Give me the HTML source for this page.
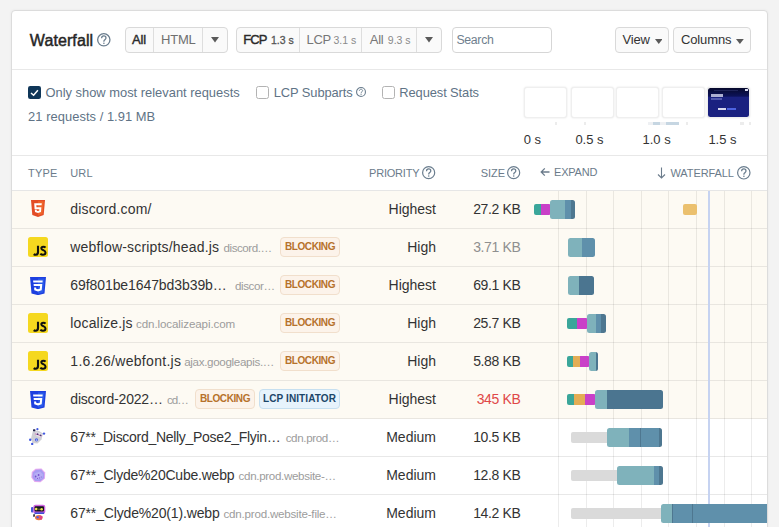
<!DOCTYPE html>
<html><head><meta charset="utf-8">
<style>
*{box-sizing:border-box;margin:0;padding:0}
html,body{width:779px;height:527px;overflow:hidden;background:#f3f3f3;font-family:"Liberation Sans",sans-serif;color:#333;position:relative}
.a{position:absolute;white-space:nowrap}
.grp{border:1px solid #d9d9d9;border-radius:4px;background:#fafafa}
.dv{width:1px;background:#dedede}
.frame{top:87px;width:43px;height:31px;border:1px solid #efefef;border-radius:3px;background:#fff;box-shadow:0 0 2px rgba(0,0,0,.13)}
.badge{height:20px;border-radius:4px;font-size:10px;font-weight:700;line-height:18px;text-align:center;letter-spacing:-0.4px}
.blk{background:#fcf3ea;border:1px solid #f1dfcc;color:#b6712b}
.lcp{background:#e7f3fc;border:1px solid #c6dff0;color:#1c4669;letter-spacing:0.1px}
</style></head><body>
<div class="a" style="left:11px;top:10px;width:757px;height:560px;background:#fff;border:1px solid #dcdcdc;border-radius:4px;box-shadow:0 0 3px rgba(0,0,0,.05)"></div>
<div class="a" style="left:29.8px;top:31.01px;font-size:16px;line-height:19px;color:#262626;font-weight:400;letter-spacing:0.1px;-webkit-text-stroke:0.45px #262626;">Waterfall</div>
<svg class="a" style="left:97.3px;top:33.2px" width="13.6" height="13.6" viewBox="0 0 13.6 13.6"><circle cx="6.8" cy="6.8" r="6.1499999999999995" fill="none" stroke="#6a7d8e" stroke-width="1.3"/><g transform="scale(1.0)"><path d="M4.6 5.3C4.6 3.9 5.6 3 6.8 3C8 3 9 3.8 9 5C9 6.3 7.6 6.6 7.1 7.5C6.9 7.9 6.9 8.3 6.9 8.7" fill="none" stroke="#6a7d8e" stroke-width="1.25"/><circle cx="6.9" cy="10.3" r="0.8" fill="#6a7d8e"/></g></svg>
<div class="a grp" style="left:125px;top:27px;width:103px;height:26px"></div>
<div class="a dv" style="left:153px;top:28px;height:24px"></div>
<div class="a dv" style="left:202px;top:28px;height:24px"></div>
<div class="a" style="left:132px;top:31.70px;font-size:13px;line-height:16px;color:#2a2a2a;font-weight:400;letter-spacing:-0.1px;-webkit-text-stroke:0.4px #2a2a2a;">All</div>
<div class="a" style="left:161px;top:31.70px;font-size:13px;line-height:16px;color:#6f6f6f;font-weight:400;letter-spacing:-0.2px;">HTML</div>
<svg class="a" style="left:211px;top:37.2px" width="8" height="5.5" viewBox="0 0 8 5.5"><path d="M0 0H8L4.0 5.5Z" fill="#5a5a5a"/></svg>
<div class="a grp" style="left:236px;top:27px;width:206px;height:26px"></div>
<div class="a dv" style="left:299px;top:28px;height:24px"></div>
<div class="a dv" style="left:361px;top:28px;height:24px"></div>
<div class="a dv" style="left:416px;top:28px;height:24px"></div>
<div class="a" style="left:243.3px;top:31.50px;font-size:13px;line-height:16px;color:#2a2a2a;font-weight:400;letter-spacing:-0.9px;-webkit-text-stroke:0.4px #2a2a2a;">FCP</div>
<div class="a" style="left:271px;top:33.83px;font-size:10.5px;line-height:13px;color:#555;font-weight:400;letter-spacing:0px;-webkit-text-stroke:0.3px #555;">1.3 s</div>
<div class="a" style="left:306.6px;top:31.50px;font-size:13px;line-height:16px;color:#777;font-weight:400;letter-spacing:-0.3px;">LCP</div>
<div class="a" style="left:333.5px;top:33.83px;font-size:10.5px;line-height:13px;color:#8a8a8a;font-weight:400;letter-spacing:0px;">3.1 s</div>
<div class="a" style="left:369.7px;top:31.50px;font-size:13px;line-height:16px;color:#777;font-weight:400;letter-spacing:-0.2px;">All</div>
<div class="a" style="left:387.8px;top:33.83px;font-size:10.5px;line-height:13px;color:#8a8a8a;font-weight:400;letter-spacing:0px;">9.3 s</div>
<svg class="a" style="left:425px;top:37.2px" width="8" height="5.5" viewBox="0 0 8 5.5"><path d="M0 0H8L4.0 5.5Z" fill="#5a5a5a"/></svg>
<div class="a grp" style="left:452px;top:27px;width:100px;height:26px;background:#fff;border-color:#d6d6d6"></div>
<div class="a" style="left:456.4px;top:32.53px;font-size:12.3px;line-height:15px;color:#6f7f8e;font-weight:400;letter-spacing:-0.3px;">Search</div>
<div class="a grp" style="left:615px;top:27px;width:54px;height:26px"></div>
<div class="a" style="left:622.5px;top:31.60px;font-size:13px;line-height:16px;color:#333;font-weight:400;letter-spacing:-0.2px;">View</div>
<svg class="a" style="left:654.7px;top:38.6px" width="7.5" height="5" viewBox="0 0 7.5 5"><path d="M0 0H7.5L3.75 5Z" fill="#5a5a5a"/></svg>
<div class="a grp" style="left:673px;top:27px;width:78px;height:26px"></div>
<div class="a" style="left:680.9px;top:31.60px;font-size:13px;line-height:16px;color:#333;font-weight:400;letter-spacing:-0.1px;">Columns</div>
<svg class="a" style="left:736px;top:38.6px" width="7.8" height="5" viewBox="0 0 7.8 5"><path d="M0 0H7.8L3.9 5Z" fill="#5a5a5a"/></svg>
<div class="a" style="left:12px;top:69px;width:755px;height:1px;background:#e8e8e8"></div>
<svg class="a" style="left:28px;top:86px" width="13" height="13" viewBox="0 0 13 13"><rect x="0" y="0" width="13" height="13" rx="2.2" fill="#0f3658"/><path d="M3 7L5.6 9.2L9.9 4.2" fill="none" stroke="#fff" stroke-width="1.5"/></svg>
<div class="a" style="left:45.5px;top:85.24px;font-size:12.9px;line-height:15px;color:#607386;font-weight:400;letter-spacing:0px;">Only show most relevant requests</div>
<div class="a" style="left:256px;top:86px;width:13px;height:13px;border:1px solid #b3b3b3;border-radius:2.5px;background:#fff"></div>
<div class="a" style="left:273.8px;top:85.24px;font-size:12.9px;line-height:15px;color:#607386;font-weight:400;letter-spacing:-0.1px;">LCP Subparts</div>
<svg class="a" style="left:356px;top:87.2px" width="10" height="10" viewBox="0 0 10 10"><circle cx="5.0" cy="5.0" r="4.45" fill="none" stroke="#6a7d8e" stroke-width="1.1"/><g transform="scale(0.7352941176470589)"><path d="M4.6 5.3C4.6 3.9 5.6 3 6.8 3C8 3 9 3.8 9 5C9 6.3 7.6 6.6 7.1 7.5C6.9 7.9 6.9 8.3 6.9 8.7" fill="none" stroke="#6a7d8e" stroke-width="1.25"/><circle cx="6.9" cy="10.3" r="0.8" fill="#6a7d8e"/></g></svg>
<div class="a" style="left:382px;top:86px;width:13px;height:13px;border:1px solid #b3b3b3;border-radius:2.5px;background:#fff"></div>
<div class="a" style="left:399.3px;top:85.24px;font-size:12.9px;line-height:15px;color:#607386;font-weight:400;letter-spacing:-0.1px;">Request Stats</div>
<div class="a" style="left:28.1px;top:109.04px;font-size:12.9px;line-height:15px;color:#607386;font-weight:400;letter-spacing:0.05px;">21 requests / 1.91 MB</div>
<div class="a frame" style="left:524px"></div>
<div class="a frame" style="left:570.5px"></div>
<div class="a frame" style="left:616px"></div>
<div class="a frame" style="left:661.5px"></div>
<div class="a frame" style="left:707px;background:#fff;border-color:#efefef"></div>
<div class="a" style="left:707.5px;top:88px;width:41px;height:29px;border-radius:2.5px;background:linear-gradient(#06092c 0px,#0c1258 8px,#1a2180 9.5px,#1a2180 100%)"></div>
<div class="a" style="left:711px;top:94px;width:12px;height:2.5px;background:#c9cbe6;opacity:.85"></div>
<div class="a" style="left:711px;top:98px;width:11px;height:2px;background:#5f66b8;opacity:.8"></div>
<div class="a" style="left:718px;top:108px;width:8px;height:1.8px;background:#d7d8ef"></div>
<div class="a" style="left:727px;top:108px;width:9px;height:1.8px;background:#4d63e0"></div>
<div class="a" style="left:745px;top:89px;width:2.5px;height:2px;background:#d9dcf2"></div>
<div class="a" style="left:714px;top:89.5px;width:24px;height:1px;background:#2a2f66;opacity:.7"></div>
<div class="a" style="left:555px;top:122px;width:2px;height:3px;background:#ececec"></div>
<div class="a" style="left:584px;top:122px;width:2px;height:3px;background:#ececec"></div>
<div class="a" style="left:648px;top:122px;width:5px;height:3px;background:#eef0f3"></div>
<div class="a" style="left:653px;top:122px;width:7px;height:3px;background:#c6d6e2"></div>
<div class="a" style="left:660px;top:122px;width:6px;height:3px;background:#eef0f3"></div>
<div class="a" style="left:666px;top:122px;width:13px;height:3px;background:#c6d6e2"></div>
<div class="a" style="left:686px;top:122px;width:2px;height:3px;background:#ececec"></div>
<div class="a" style="left:740px;top:122px;width:4px;height:3px;background:#ececec"></div>
<div class="a" style="left:749px;top:122px;width:2px;height:3px;background:#ececec"></div>
<div class="a" style="left:523.7px;top:131.70px;font-size:13px;line-height:16px;color:#333;font-weight:400;letter-spacing:0px;">0 s</div>
<div class="a" style="left:575.4px;top:131.70px;font-size:13px;line-height:16px;color:#333;font-weight:400;letter-spacing:0px;">0.5 s</div>
<div class="a" style="left:642.5px;top:131.70px;font-size:13px;line-height:16px;color:#333;font-weight:400;letter-spacing:0px;">1.0 s</div>
<div class="a" style="left:708.4px;top:131.70px;font-size:13px;line-height:16px;color:#333;font-weight:400;letter-spacing:0px;">1.5 s</div>
<div class="a" style="left:12px;top:155px;width:755px;height:1px;background:#e8e8e8"></div>
<div class="a" style="left:28.1px;top:166.76px;font-size:11px;line-height:13px;color:#6b7b8b;font-weight:400;letter-spacing:0.2px;">TYPE</div>
<div class="a" style="left:70.2px;top:166.76px;font-size:11px;line-height:13px;color:#6b7b8b;font-weight:400;letter-spacing:0.2px;">URL</div>
<div class="a" style="left:369px;top:166.76px;font-size:11px;line-height:13px;color:#6b7b8b;font-weight:400;letter-spacing:-0.2px;">PRIORITY</div>
<svg class="a" style="left:422.4px;top:166.3px" width="13.3" height="13.3" viewBox="0 0 13.3 13.3"><circle cx="6.65" cy="6.65" r="6.050000000000001" fill="none" stroke="#6a7d8e" stroke-width="1.2"/><g transform="scale(0.9779411764705883)"><path d="M4.6 5.3C4.6 3.9 5.6 3 6.8 3C8 3 9 3.8 9 5C9 6.3 7.6 6.6 7.1 7.5C6.9 7.9 6.9 8.3 6.9 8.7" fill="none" stroke="#6a7d8e" stroke-width="1.25"/><circle cx="6.9" cy="10.3" r="0.8" fill="#6a7d8e"/></g></svg>
<div class="a" style="left:480.7px;top:166.76px;font-size:11px;line-height:13px;color:#6b7b8b;font-weight:400;letter-spacing:0px;">SIZE</div>
<svg class="a" style="left:507.4px;top:166.3px" width="13.3" height="13.3" viewBox="0 0 13.3 13.3"><circle cx="6.65" cy="6.65" r="6.050000000000001" fill="none" stroke="#6a7d8e" stroke-width="1.2"/><g transform="scale(0.9779411764705883)"><path d="M4.6 5.3C4.6 3.9 5.6 3 6.8 3C8 3 9 3.8 9 5C9 6.3 7.6 6.6 7.1 7.5C6.9 7.9 6.9 8.3 6.9 8.7" fill="none" stroke="#6a7d8e" stroke-width="1.25"/><circle cx="6.9" cy="10.3" r="0.8" fill="#6a7d8e"/></g></svg>
<svg class="a" style="left:540px;top:167px" width="10" height="10" viewBox="0 0 10 10"><path d="M9.5 5H1.2M4.8 1.4L1.2 5L4.8 8.6" fill="none" stroke="#6b7b8b" stroke-width="1.3"/></svg>
<div class="a" style="left:554px;top:166.16px;font-size:11px;line-height:13px;color:#6b7b8b;font-weight:400;letter-spacing:-0.2px;">EXPAND</div>
<svg class="a" style="left:657px;top:167px" width="9" height="12" viewBox="0 0 9 12"><path d="M4.5 0.5V11M1 7.5L4.5 11L8 7.5" fill="none" stroke="#6b7b8b" stroke-width="1.1"/></svg>
<div class="a" style="left:670.5px;top:166.76px;font-size:11px;line-height:13px;color:#6b7b8b;font-weight:400;letter-spacing:-0.1px;">WATERFALL</div>
<svg class="a" style="left:737px;top:166.3px" width="13.6" height="13.6" viewBox="0 0 13.6 13.6"><circle cx="6.8" cy="6.8" r="6.2" fill="none" stroke="#6a7d8e" stroke-width="1.2"/><g transform="scale(1.0)"><path d="M4.6 5.3C4.6 3.9 5.6 3 6.8 3C8 3 9 3.8 9 5C9 6.3 7.6 6.6 7.1 7.5C6.9 7.9 6.9 8.3 6.9 8.7" fill="none" stroke="#6a7d8e" stroke-width="1.25"/><circle cx="6.9" cy="10.3" r="0.8" fill="#6a7d8e"/></g></svg>
<div class="a" style="left:12px;top:190px;width:755px;height:1px;background:#e6e6e6"></div>
<div class="a" style="left:12px;top:191px;width:755px;height:37px;background:#fdfaf3"></div>
<div class="a" style="left:12px;top:228px;width:755px;height:1px;background:#e9e6e0"></div>
<div class="a" style="left:12px;top:229px;width:755px;height:37px;background:#fdfaf3"></div>
<div class="a" style="left:12px;top:266px;width:755px;height:1px;background:#e9e6e0"></div>
<div class="a" style="left:12px;top:267px;width:755px;height:37px;background:#fdfaf3"></div>
<div class="a" style="left:12px;top:304px;width:755px;height:1px;background:#e9e6e0"></div>
<div class="a" style="left:12px;top:305px;width:755px;height:37px;background:#fdfaf3"></div>
<div class="a" style="left:12px;top:342px;width:755px;height:1px;background:#e9e6e0"></div>
<div class="a" style="left:12px;top:343px;width:755px;height:37px;background:#fdfaf3"></div>
<div class="a" style="left:12px;top:380px;width:755px;height:1px;background:#e9e6e0"></div>
<div class="a" style="left:12px;top:381px;width:755px;height:37px;background:#fdfaf3"></div>
<div class="a" style="left:12px;top:418px;width:755px;height:1px;background:#e9e6e0"></div>
<div class="a" style="left:12px;top:419px;width:755px;height:37px;background:#fff"></div>
<div class="a" style="left:12px;top:456px;width:755px;height:1px;background:#e8e8e8"></div>
<div class="a" style="left:12px;top:457px;width:755px;height:37px;background:#fff"></div>
<div class="a" style="left:12px;top:494px;width:755px;height:1px;background:#e8e8e8"></div>
<div class="a" style="left:12px;top:495px;width:755px;height:37px;background:#fff"></div>
<div class="a" style="left:12px;top:532px;width:755px;height:1px;background:#e8e8e8"></div>
<div class="a" style="left:557.90px;top:191px;width:1px;height:336px;background:rgba(0,0,0,.075)"></div>
<div class="a" style="left:585.54px;top:191px;width:1px;height:336px;background:rgba(0,0,0,.075)"></div>
<div class="a" style="left:613.18px;top:191px;width:1px;height:336px;background:rgba(0,0,0,.075)"></div>
<div class="a" style="left:640.82px;top:191px;width:1px;height:336px;background:rgba(0,0,0,.075)"></div>
<div class="a" style="left:668.46px;top:191px;width:1px;height:336px;background:rgba(0,0,0,.075)"></div>
<div class="a" style="left:696.10px;top:191px;width:1px;height:336px;background:rgba(0,0,0,.075)"></div>
<div class="a" style="left:723.74px;top:191px;width:1px;height:336px;background:rgba(0,0,0,.075)"></div>
<div class="a" style="left:751.38px;top:191px;width:1px;height:336px;background:rgba(0,0,0,.075)"></div>
<div class="a" style="left:708px;top:191px;width:1.6px;height:336px;background:#c6d3f1"></div>
<svg class="a" style="left:31px;top:200px" width="14" height="17" viewBox="0 0 14 17"><path d="M0 0H14L12.7 15L7 17L1.3 15Z" fill="#e34c26"/><path d="M7 1.2V15.6L11.6 14.1L12.7 1.2Z" fill="#ef652a"/><path d="M3.2 3.2H10.8L10.6 5.2H5.3L5.5 7.3H10.4L10 12L7 12.9L4 12L3.8 9.7H5.7L5.8 10.7L7 11.1L8.2 10.7L8.4 9.2H3.6Z" fill="#fff"/></svg>
<div class="a" style="left:70.3px;top:200.87px;font-size:14px;line-height:17px;color:#333;font-weight:400;letter-spacing:0.16px;">discord.com/</div>
<div class="a" style="right:343px;top:200.87px;font-size:14px;line-height:17px;color:#333">Highest</div>
<div class="a" style="right:258.5px;top:200.87px;font-size:14px;line-height:17px;color:#333;letter-spacing:-0.35px">27.2 KB</div>
<div class="a" style="left:534px;top:204px;width:16.50px;height:10.5px;border-radius:2px;overflow:hidden"><div style="position:absolute;left:0.00px;width:7.20px;top:0;bottom:0;background:#3aa69a"></div><div style="position:absolute;left:7.20px;width:9.30px;top:0;bottom:0;background:#c940c8"></div></div>
<div class="a" style="left:682.8px;top:204px;width:14.70px;height:10.5px;border-radius:2px;overflow:hidden"><div style="position:absolute;left:0.00px;width:14.70px;top:0;bottom:0;background:#ebc06e"></div></div>
<div class="a" style="left:549.8px;top:200px;width:25.40px;height:18.5px;border-radius:2.5px;overflow:hidden"><div style="position:absolute;left:0.00px;width:15.40px;top:0;bottom:0;background:#7fb2bb"></div><div style="position:absolute;left:15.40px;width:5.60px;top:0;bottom:0;background:#5f90ab"></div><div style="position:absolute;left:21.00px;width:4.40px;top:0;bottom:0;background:#4e7790"></div></div>
<svg class="a" style="left:28px;top:237px" width="20" height="20" viewBox="0 0 20 20"><rect width="20" height="20" rx="2.5" fill="#f5d81f"/><path d="M10 8.8V15.1C10 17 9 17.8 7.6 17.8C6.8 17.8 6.2 17.5 5.7 17.1" fill="none" stroke="#111" stroke-width="2.1"/><path d="M17.5 10.7C17 10 16.2 9.7 15.3 9.7C14.1 9.7 13.3 10.3 13.3 11.3C13.3 12.4 14.3 12.8 15.4 13.2C16.6 13.7 17.5 14.3 17.5 15.6C17.5 16.9 16.5 17.8 15 17.8C14 17.8 13 17.4 12.3 16.7" fill="none" stroke="#111" stroke-width="2"/></svg>
<div class="a" style="left:70.3px;top:238.87px;font-size:14px;line-height:17px;color:#333;font-weight:400;letter-spacing:0.186px;">webflow-scripts/head.js</div>
<div class="a" style="left:223.5px;top:241.17px;font-size:11.6px;line-height:14px;color:#9c9c9c;font-weight:400;letter-spacing:-0.44px;">discord.…</div>
<div class="a badge blk" style="left:280px;top:237px;width:60px">BLOCKING</div>
<div class="a" style="right:343px;top:238.87px;font-size:14px;line-height:17px;color:#333">High</div>
<div class="a" style="right:258.5px;top:238.87px;font-size:14px;line-height:17px;color:#8f8f8f;letter-spacing:-0.35px">3.71 KB</div>
<div class="a" style="left:568.1px;top:238px;width:26.60px;height:18.5px;border-radius:2.5px;overflow:hidden"><div style="position:absolute;left:0.00px;width:14.10px;top:0;bottom:0;background:#7fb2bb"></div><div style="position:absolute;left:14.10px;width:12.50px;top:0;bottom:0;background:#5f90ab"></div></div>
<svg class="a" style="left:30px;top:276.7px" width="16" height="18.2" viewBox="0 0 16 18.2"><path d="M0 0H16L14.5 16.4L8 18.2L1.5 16.4Z" fill="#1d3fe0"/><path d="M8 1.4V16.8L13.2 15.4L14.5 1.4Z" fill="#2a5ae9"/><path d="M3.1 3.4H12.7L12.5 5.5H3.3Z" fill="#fff"/><path d="M3.6 6.9H12.3L11.7 13.3L8 14.4L4.3 13.3L4.1 10.5H6.1L6.2 11.7L8 12.2L9.8 11.7L10.1 9H3.8Z" fill="#fff"/></svg>
<div class="a" style="left:70.3px;top:276.87px;font-size:14px;line-height:17px;color:#333;font-weight:400;letter-spacing:-0.08px;">69f801be1647bd3b39b…</div>
<div class="a" style="left:235px;top:279.17px;font-size:11.6px;line-height:14px;color:#9c9c9c;font-weight:400;letter-spacing:-0.4px;">discor…</div>
<div class="a badge blk" style="left:280px;top:275px;width:60px">BLOCKING</div>
<div class="a" style="right:343px;top:276.87px;font-size:14px;line-height:17px;color:#333">Highest</div>
<div class="a" style="right:258.5px;top:276.87px;font-size:14px;line-height:17px;color:#333;letter-spacing:-0.35px">69.1 KB</div>
<div class="a" style="left:568px;top:276px;width:26.00px;height:18.5px;border-radius:2.5px;overflow:hidden"><div style="position:absolute;left:0.00px;width:10.90px;top:0;bottom:0;background:#7fb2bb"></div><div style="position:absolute;left:10.90px;width:15.10px;top:0;bottom:0;background:#4b7590"></div></div>
<svg class="a" style="left:28px;top:313px" width="20" height="20" viewBox="0 0 20 20"><rect width="20" height="20" rx="2.5" fill="#f5d81f"/><path d="M10 8.8V15.1C10 17 9 17.8 7.6 17.8C6.8 17.8 6.2 17.5 5.7 17.1" fill="none" stroke="#111" stroke-width="2.1"/><path d="M17.5 10.7C17 10 16.2 9.7 15.3 9.7C14.1 9.7 13.3 10.3 13.3 11.3C13.3 12.4 14.3 12.8 15.4 13.2C16.6 13.7 17.5 14.3 17.5 15.6C17.5 16.9 16.5 17.8 15 17.8C14 17.8 13 17.4 12.3 16.7" fill="none" stroke="#111" stroke-width="2"/></svg>
<div class="a" style="left:70.3px;top:314.87px;font-size:14px;line-height:17px;color:#333;font-weight:400;letter-spacing:0.16px;">localize.js</div>
<div class="a" style="left:136.1px;top:317.17px;font-size:11.6px;line-height:14px;color:#9c9c9c;font-weight:400;letter-spacing:-0.117px;">cdn.localizeapi.com</div>
<div class="a badge blk" style="left:280px;top:313px;width:60px">BLOCKING</div>
<div class="a" style="right:343px;top:314.87px;font-size:14px;line-height:17px;color:#333">High</div>
<div class="a" style="right:258.5px;top:314.87px;font-size:14px;line-height:17px;color:#333;letter-spacing:-0.35px">25.7 KB</div>
<div class="a" style="left:567.2px;top:318px;width:20.80px;height:10.5px;border-radius:2px;overflow:hidden"><div style="position:absolute;left:0.00px;width:10.20px;top:0;bottom:0;background:#3aa69a"></div><div style="position:absolute;left:10.20px;width:10.60px;top:0;bottom:0;background:#c940c8"></div></div>
<div class="a" style="left:587.2px;top:314px;width:19.00px;height:18.5px;border-radius:2.5px;overflow:hidden"><div style="position:absolute;left:0.00px;width:9.10px;top:0;bottom:0;background:#7fb2bb"></div><div style="position:absolute;left:9.10px;width:4.60px;top:0;bottom:0;background:#5f90ab"></div><div style="position:absolute;left:13.70px;width:5.30px;top:0;bottom:0;background:#4e7790"></div></div>
<svg class="a" style="left:28px;top:351px" width="20" height="20" viewBox="0 0 20 20"><rect width="20" height="20" rx="2.5" fill="#f5d81f"/><path d="M10 8.8V15.1C10 17 9 17.8 7.6 17.8C6.8 17.8 6.2 17.5 5.7 17.1" fill="none" stroke="#111" stroke-width="2.1"/><path d="M17.5 10.7C17 10 16.2 9.7 15.3 9.7C14.1 9.7 13.3 10.3 13.3 11.3C13.3 12.4 14.3 12.8 15.4 13.2C16.6 13.7 17.5 14.3 17.5 15.6C17.5 16.9 16.5 17.8 15 17.8C14 17.8 13 17.4 12.3 16.7" fill="none" stroke="#111" stroke-width="2"/></svg>
<div class="a" style="left:70.3px;top:352.87px;font-size:14px;line-height:17px;color:#333;font-weight:400;letter-spacing:0.306px;">1.6.26/webfont.js</div>
<div class="a" style="left:184.2px;top:355.17px;font-size:11.6px;line-height:14px;color:#9c9c9c;font-weight:400;letter-spacing:-0.325px;">ajax.googleapis.…</div>
<div class="a badge blk" style="left:280px;top:351px;width:60px">BLOCKING</div>
<div class="a" style="right:343px;top:352.87px;font-size:14px;line-height:17px;color:#333">High</div>
<div class="a" style="right:258.5px;top:352.87px;font-size:14px;line-height:17px;color:#333;letter-spacing:-0.35px">5.88 KB</div>
<div class="a" style="left:567px;top:356px;width:23.00px;height:10.5px;border-radius:2px;overflow:hidden"><div style="position:absolute;left:0.00px;width:6.20px;top:0;bottom:0;background:#3aa69a"></div><div style="position:absolute;left:6.20px;width:7.20px;top:0;bottom:0;background:#e3ad55"></div><div style="position:absolute;left:13.40px;width:9.60px;top:0;bottom:0;background:#c940c8"></div></div>
<div class="a" style="left:589.2px;top:352px;width:8.60px;height:18.5px;border-radius:2.5px;overflow:hidden"><div style="position:absolute;left:0.00px;width:6.60px;top:0;bottom:0;background:#7fb2bb"></div><div style="position:absolute;left:6.60px;width:2.00px;top:0;bottom:0;background:#4b7590"></div></div>
<svg class="a" style="left:30px;top:390.7px" width="16" height="18.2" viewBox="0 0 16 18.2"><path d="M0 0H16L14.5 16.4L8 18.2L1.5 16.4Z" fill="#1d3fe0"/><path d="M8 1.4V16.8L13.2 15.4L14.5 1.4Z" fill="#2a5ae9"/><path d="M3.1 3.4H12.7L12.5 5.5H3.3Z" fill="#fff"/><path d="M3.6 6.9H12.3L11.7 13.3L8 14.4L4.3 13.3L4.1 10.5H6.1L6.2 11.7L8 12.2L9.8 11.7L10.1 9H3.8Z" fill="#fff"/></svg>
<div class="a" style="left:70.3px;top:390.87px;font-size:14px;line-height:17px;color:#333;font-weight:400;letter-spacing:-0.19px;">discord-2022…</div>
<div class="a" style="left:167px;top:393.17px;font-size:11.6px;line-height:14px;color:#9c9c9c;font-weight:400;letter-spacing:-1.0px;">cd…</div>
<div class="a badge blk" style="left:195px;top:389px;width:60px">BLOCKING</div>
<div class="a badge lcp" style="left:259px;top:389px;width:81px">LCP INITIATOR</div>
<div class="a" style="right:343px;top:390.87px;font-size:14px;line-height:17px;color:#333">Highest</div>
<div class="a" style="right:258.5px;top:390.87px;font-size:14px;line-height:17px;color:#e04848;letter-spacing:-0.35px">345 KB</div>
<div class="a" style="left:567px;top:394px;width:29.00px;height:10.5px;border-radius:2px;overflow:hidden"><div style="position:absolute;left:0.00px;width:7.30px;top:0;bottom:0;background:#3aa69a"></div><div style="position:absolute;left:7.30px;width:10.40px;top:0;bottom:0;background:#e3ad55"></div><div style="position:absolute;left:17.70px;width:11.30px;top:0;bottom:0;background:#c940c8"></div></div>
<div class="a" style="left:595px;top:390px;width:68.30px;height:18.5px;border-radius:2.5px;overflow:hidden"><div style="position:absolute;left:0.00px;width:11.60px;top:0;bottom:0;background:#7fb2bb"></div><div style="position:absolute;left:11.60px;width:56.70px;top:0;bottom:0;background:#4b7590"></div></div>
<svg class="a" style="left:29px;top:428px;filter:blur(0.35px)" width="17" height="17" viewBox="0 0 17 17"><path d="M4 2.5L10 3L14 5.5L12.5 11.5L8.5 15.5L3.5 15L2 10.5Z" fill="#cfcfd6"/><path d="M6.5 4.5L10.5 4.8L13 6.5L11.5 9L7.5 8Z" fill="#e9e9ef"/><path d="M6.2 5.2L13 7.6L12.6 8.6L5.8 6.2Z" fill="#d88ac4"/><circle cx="8.6" cy="6.2" r="0.9" fill="#4a3c72"/><circle cx="11.6" cy="7.3" r="0.9" fill="#4a3c72"/><rect x="4" y="1.2" width="2.4" height="2" rx="0.6" fill="#23234a"/><circle cx="8.4" cy="1.2" r="1.1" fill="#4058e0"/><circle cx="15" cy="5.6" r="1.2" fill="#4058e0"/><circle cx="1.2" cy="11.7" r="1.2" fill="#4058e0"/><circle cx="7.5" cy="11.8" r="1.6" fill="#4a62e6"/><circle cx="7.6" cy="12" r="0.6" fill="#fff"/><circle cx="3.2" cy="16" r="1.2" fill="#4058e0"/></svg>
<div class="a" style="left:70.3px;top:428.87px;font-size:14px;line-height:17px;color:#333;font-weight:400;letter-spacing:-0.3px;">67**_Discord_Nelly_Pose2_Flyin…</div>
<div class="a" style="left:285.7px;top:431.17px;font-size:11.6px;line-height:14px;color:#9c9c9c;font-weight:400;letter-spacing:-0.36px;">cdn.prod…</div>
<div class="a" style="right:343px;top:428.87px;font-size:14px;line-height:17px;color:#333">Medium</div>
<div class="a" style="right:258.5px;top:428.87px;font-size:14px;line-height:17px;color:#333;letter-spacing:-0.35px">10.5 KB</div>
<div class="a" style="left:571.2px;top:432px;width:37.8px;height:10.5px;background:#dadada;border-radius:2px"></div>
<div class="a" style="left:606.6px;top:428px;width:55.50px;height:18.5px;border-radius:2.5px;overflow:hidden"><div style="position:absolute;left:0.00px;width:22.10px;top:0;bottom:0;background:#7fb2bb"></div><div style="position:absolute;left:22.10px;width:11.80px;top:0;bottom:0;background:#5f90ab"></div><div style="position:absolute;left:33.90px;width:1.00px;top:0;bottom:0;background:#4e7790"></div><div style="position:absolute;left:34.90px;width:17.50px;top:0;bottom:0;background:#5f90ab"></div><div style="position:absolute;left:52.40px;width:3.10px;top:0;bottom:0;background:#4e7790"></div></div>
<svg class="a" style="left:31px;top:468px;filter:blur(0.35px)" width="15" height="15" viewBox="0 0 15 15"><path d="M4.5 0.8L10.5 0.5L14.2 4.5L14 10.5L9.5 14.3L3.5 14L0.3 9.5L0.8 4Z" fill="#e6a8f0"/><path d="M5 1.8L10.2 1.5L13.2 5L13 10.2L9.2 13.3L4 13L1.4 9.2L1.8 4.6Z" fill="#a89cf2"/><path d="M3.5 5.5L9 3.6L12 6.5L11 10.5L6 11.5L3 9Z" fill="#b7aef4"/><circle cx="4.6" cy="8.5" r="0.9" fill="#7b4fd0"/><circle cx="7.6" cy="7" r="0.9" fill="#7b4fd0"/><circle cx="6.5" cy="10.4" r="0.6" fill="#8a5ad6"/><circle cx="8.5" cy="9.9" r="0.6" fill="#8a5ad6"/><circle cx="10.3" cy="9" r="0.6" fill="#8a5ad6"/></svg>
<div class="a" style="left:70.3px;top:466.87px;font-size:14px;line-height:17px;color:#333;font-weight:400;letter-spacing:-0.224px;">67**_Clyde%20Cube.webp</div>
<div class="a" style="left:238.6px;top:469.17px;font-size:11.6px;line-height:14px;color:#9c9c9c;font-weight:400;letter-spacing:-0.33px;">cdn.prod.website-…</div>
<div class="a" style="right:343px;top:466.87px;font-size:14px;line-height:17px;color:#333">Medium</div>
<div class="a" style="right:258.5px;top:466.87px;font-size:14px;line-height:17px;color:#333;letter-spacing:-0.35px">12.8 KB</div>
<div class="a" style="left:571.2px;top:470px;width:48.8px;height:10.5px;background:#dadada;border-radius:2px"></div>
<div class="a" style="left:617.1px;top:466px;width:46.10px;height:18.5px;border-radius:2.5px;overflow:hidden"><div style="position:absolute;left:0.00px;width:37.30px;top:0;bottom:0;background:#7fb2bb"></div><div style="position:absolute;left:37.30px;width:4.60px;top:0;bottom:0;background:#5f90ab"></div><div style="position:absolute;left:41.90px;width:4.20px;top:0;bottom:0;background:#4e7790"></div></div>
<svg class="a" style="left:31px;top:503px;filter:blur(0.3px)" width="15" height="19" viewBox="0 0 15 19"><rect x="0" y="4" width="2.5" height="5.5" rx="1" fill="#4a55d8"/><rect x="2.3" y="1.8" width="12" height="8.8" rx="2.2" fill="#cf63e0"/><rect x="3.6" y="3.2" width="9.4" height="5.4" rx="1" fill="#15151c"/><circle cx="5.2" cy="6" r="1.3" fill="#e9e450"/><circle cx="10.6" cy="6.3" r="1.3" fill="#e9e450"/><rect x="7.3" y="5.6" width="1.5" height="1.4" fill="#6b7a2a"/><rect x="3.6" y="9.4" width="9.5" height="1.6" fill="#3b4ed8"/><path d="M2.5 11L4.2 11.5L3.5 14L2 13.5Z" fill="#2a2a3a"/><ellipse cx="7.8" cy="14.6" rx="3.8" ry="2.6" fill="#ef7a3a"/><circle cx="6.6" cy="14.2" r="1.2" fill="#5a5ae0"/><path d="M8.5 12.2L11.6 13.5L10.5 17L8.5 16Z" fill="#e0408a"/></svg>
<div class="a" style="left:70.3px;top:504.87px;font-size:14px;line-height:17px;color:#333;font-weight:400;letter-spacing:-0.155px;">67**_Clyde%20(1).webp</div>
<div class="a" style="left:223.5px;top:507.17px;font-size:11.6px;line-height:14px;color:#9c9c9c;font-weight:400;letter-spacing:-0.214px;">cdn.prod.website-file…</div>
<div class="a" style="right:343px;top:504.87px;font-size:14px;line-height:17px;color:#333">Medium</div>
<div class="a" style="right:258.5px;top:504.87px;font-size:14px;line-height:17px;color:#333;letter-spacing:-0.35px">14.2 KB</div>
<div class="a" style="left:571.4px;top:508px;width:92.6px;height:10.5px;background:#dadada;border-radius:2px"></div>
<div class="a" style="left:661.4px;top:504px;width:105.60px;height:18.5px;border-radius:2.5px 0 0 2.5px;overflow:hidden"><div style="position:absolute;left:0.00px;width:10.90px;top:0;bottom:0;background:#7fb2bb"></div><div style="position:absolute;left:10.90px;width:1.20px;top:0;bottom:0;background:#4e7790"></div><div style="position:absolute;left:12.10px;width:18.60px;top:0;bottom:0;background:#5f90ab"></div><div style="position:absolute;left:30.70px;width:0.90px;top:0;bottom:0;background:#4e7790"></div><div style="position:absolute;left:31.60px;width:74.00px;top:0;bottom:0;background:#5f90ab"></div></div>
</body></html>
